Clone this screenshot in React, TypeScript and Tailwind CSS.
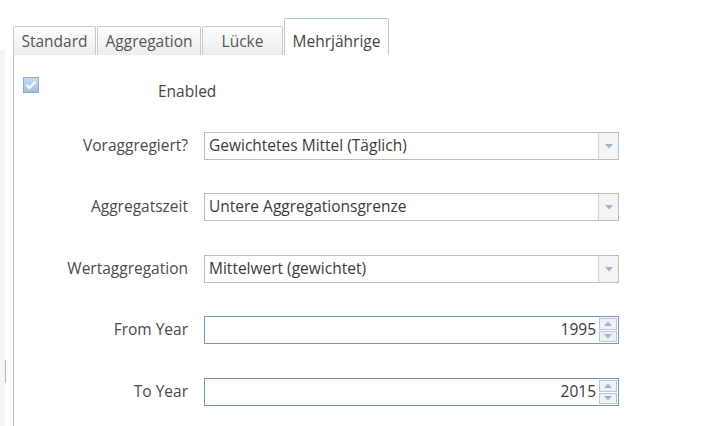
import React from 'react';

const font = { fontFamily: '"Open Sans", "Noto Sans", sans-serif' };

const tabs = [
  { label: 'Standard', w: 'w-[83px]' },
  { label: 'Aggregation', w: 'w-[104px]' },
  { label: 'Lücke', w: 'w-[81px]' },
];

const Arrow: React.FC<{ up?: boolean }> = ({ up }) => (
  <svg width="8" height="5" viewBox="0 0 8 5">
    {up ? <path d="M0 5 L4 0.5 L8 5 Z" fill="#9fb2d2" /> : <path d="M0 0 L8 0 L4 4.5 Z" fill="#9fb2d2" />}
  </svg>
);

const SelectBox: React.FC<{ value: string }> = ({ value }) => (
  <div className="flex w-[415px] h-[28px] border border-[#b7bccb] bg-white">
    <div className="flex-1 flex items-center pl-[4px] text-[15.5px] text-[#3a3a3a]">{value}</div>
    <div className="w-[20px] flex items-center justify-center border-l border-[#cdd1dc] bg-[#f4f4f4]">
      <Arrow />
    </div>
  </div>
);

const NumberBox: React.FC<{ value: string }> = ({ value }) => (
  <div className="flex w-[415px] h-[28px] border border-[#7397bf] bg-white">
    <div className="flex-1 flex items-center justify-end pr-[3px] text-[15.5px] text-[#3a3a3a]">{value}</div>
    <div className="w-[19px] flex flex-col gap-px py-px pr-px">
      <div className="flex-1 flex items-center justify-center border border-[#b9c5d9] bg-[#eef1f6]">
        <Arrow up />
      </div>
      <div className="flex-1 flex items-center justify-center border border-[#b9c5d9] bg-[#eef1f6]">
        <Arrow />
      </div>
    </div>
  </div>
);

const Row: React.FC<{ label: string; className?: string; children: React.ReactNode }> = ({ label, className, children }) => (
  <div className={`flex items-center gap-[16px] ${className ?? ''}`}>
    <div className="w-[174px] text-right text-[15.5px] text-[#4a4a4a]">{label}</div>
    {children}
  </div>
);

export default function App() {
  return (
    <div className="flex w-[711px] h-[426px] bg-white overflow-hidden" style={font}>
      <div className="w-[13px] flex flex-col">
        <div className="h-[50px]" />
        <div className="flex-1 flex">
          <div className="w-[5px] bg-[#f5f5f6]" />
          <div className="flex flex-col">
            <div className="h-[310px]" />
            <div className="w-px h-[23px] bg-[#b3b7c6]" />
          </div>
        </div>
      </div>

      <div className="flex-1 flex flex-col">
        <div className="flex items-end gap-[1px] h-[55px]">
          {tabs.map((t) => (
            <div
              key={t.label}
              className={`${t.w} h-[29px] flex items-center justify-center border border-b-0 border-[#c6c8cf] rounded-t-[2px] bg-gradient-to-b from-[#fdfdfd] to-[#ededed] text-[15.5px] text-[#555] pt-[2px]`}
            >
              {t.label}
            </div>
          ))}
          <div className="w-[105px] h-[37px] flex items-center justify-center border border-b-0 border-[#bcc6d6] border-t-[#a9c4e2] rounded-t-[2px] bg-white text-[15.5px] text-[#444] pt-[9px]">
            Mehrjährige
          </div>
        </div>

        <div className="flex-1 border-l border-[#b4b7c6] flex flex-col">
          <div className="flex items-start pt-[22px] pl-[9px] h-[77px]">
            <div className="w-[16px] h-[16px] border border-[#90a8c9] bg-gradient-to-b from-[#c7dcf2] to-[#9fc0e4] flex items-center justify-center">
              <svg width="12" height="10" viewBox="0 0 12 10">
                <path d="M1.5 5 L4.5 8 L10.5 1.5" stroke="white" strokeWidth="2" fill="none" />
              </svg>
            </div>
            <div className="ml-[119px] mt-[3px] text-[15.5px] text-[#444]">Enabled</div>
          </div>

          <div className="flex flex-col">
            <Row label="Voraggregiert?">
              <SelectBox value="Gewichtetes Mittel (Täglich)" />
            </Row>
            <Row label="Aggregatszeit" className="mt-[33px]">
              <SelectBox value="Untere Aggregationsgrenze" />
            </Row>
            <Row label="Wertaggregation" className="mt-[34px]">
              <SelectBox value="Mittelwert (gewichtet)" />
            </Row>
            <Row label="From Year" className="mt-[33px]">
              <NumberBox value="1995" />
            </Row>
            <Row label="To Year" className="mt-[34px]">
              <NumberBox value="2015" />
            </Row>
          </div>
        </div>
      </div>
    </div>
  );
}
